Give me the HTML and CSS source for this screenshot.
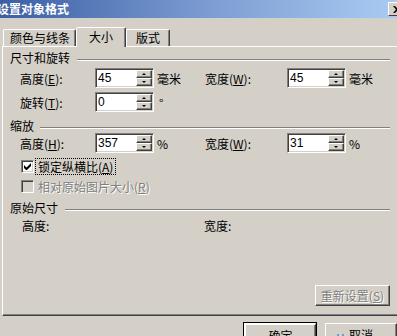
FILE: index.html
```html
<!DOCTYPE html>
<html lang="zh-CN">
<head>
    <meta charset="UTF-8">
    <title>设置对象格式</title>
    <link rel="stylesheet" href="styles.css">
</head>
<body>
    <div class="dialog">
        <div class="titlebar">
            <span class="title">设置对象格式</span>
            <span class="close">
                <svg width="8" height="7" viewBox="0 0 8 7"><path d="M0 0h2l2 2 2-2h2L5 3.5 8 7H6L4 5 2 7H0l3-3.5z" fill="#000"/></svg>
            </span>
        </div>

        <div class="tabs">
            <div class="tab tab-first">颜色与线条</div>
            <div class="tab active">大小</div>
            <div class="tab">版式</div>
        </div>

        <div class="panel">
            <div class="legend legend-size"><span>尺寸和旋转</span><i class="rule"></i></div>
            <div class="row row-first">
                <div class="field">
                    <label class="lbl">高度(<u>E</u>):</label>
                    <div class="spin"><span class="value">45</span><span class="arrows"><b class="btn"><i class="up"></i></b><b class="btn"><i class="down"></i></b></span></div>
                    <span class="unit">毫米</span>
                </div>
                <div class="field">
                    <label class="lbl lbl-wide">宽度(<u>W</u>):</label>
                    <div class="spin"><span class="value">45</span><span class="arrows"><b class="btn"><i class="up"></i></b><b class="btn"><i class="down"></i></b></span></div>
                    <span class="unit">毫米</span>
                </div>
            </div>
            <div class="row">
                <div class="field">
                    <label class="lbl">旋转(<u>T</u>):</label>
                    <div class="spin"><span class="value">0</span><span class="arrows"><b class="btn"><i class="up"></i></b><b class="btn"><i class="down"></i></b></span></div>
                    <span class="unit unit-deg">°</span>
                </div>
            </div>

            <div class="legend legend-scale"><span>缩放</span><i class="rule"></i></div>
            <div class="row">
                <div class="field">
                    <label class="lbl">高度(<u>H</u>):</label>
                    <div class="spin"><span class="value">357</span><span class="arrows"><b class="btn"><i class="up"></i></b><b class="btn"><i class="down"></i></b></span></div>
                    <span class="unit">%</span>
                </div>
                <div class="field">
                    <label class="lbl lbl-wide">宽度(<u>W</u>):</label>
                    <div class="spin"><span class="value">31</span><span class="arrows"><b class="btn"><i class="up"></i></b><b class="btn"><i class="down"></i></b></span></div>
                    <span class="unit">%</span>
                </div>
            </div>
            <div class="check check-first">
                <span class="box"><svg width="7" height="7" viewBox="0 0 7 7"><path d="M0 2v3l2 2h1l4-4V0L2.5 4.5z" fill="#000"/></svg></span>
                <span class="check-label focus">锁定纵横比(<u>A</u>)</span>
            </div>
            <div class="check disabled">
                <span class="box"></span>
                <span class="check-label">相对原始图片大小(<u>R</u>)</span>
            </div>

            <div class="legend legend-orig"><span>原始尺寸</span><i class="rule"></i></div>
            <div class="orig">
                <span class="orig-item">高度:</span>
                <span>宽度:</span>
            </div>

            <div class="actions">
                <button class="button disabled">重新设置(<u>S</u>)</button>
            </div>
        </div>

        <div class="footer">
            <button class="button default">确定</button>
            <button class="button">取消<span class="cursor"></span></button>
        </div>
    </div>
</body>
</html>
```

FILE: styles.css
```css
body {
    margin: 0;
    background-color: #d4d0c8;
    font-family: "Noto Sans CJK SC", "Liberation Sans", sans-serif;
    font-size: 12px;
    color: #000;
    overflow: hidden;
}
.dialog {
    width: 397px;
    height: 336px;
    overflow: hidden;
}
.titlebar {
    height: 18px;
    display: flex;
    align-items: center;
    justify-content: space-between;
    background: linear-gradient(to right, #3a5fa4, #7f9fd4 55%, #a9cbf2);
}
.title {
    margin-left: -3px;
    color: #fff;
    font-weight: bold;
    line-height: 14px;
}
.close {
    width: 16px;
    height: 12px;
    margin-right: -9px;
    background-color: #d4d0c8;
    border: 1px solid;
    border-color: #fff #404040 #404040 #fff;
    display: flex;
    align-items: center;
    justify-content: center;
}

/* tabs */
.tabs {
    height: 28px;
    display: flex;
    align-items: flex-end;
    padding-left: 3px;
}
.tab {
    height: 16px;
    line-height: 16px;
    padding: 0 9px;
    border: 1px solid;
    border-bottom: none;
    border-color: #fff #404040 transparent #fff;
    box-shadow: inset -1px 0 #808080;
    border-radius: 2px 2px 0 0;
}
.tab-first {
    padding: 0 5px 0 6px;
}
.tab.active {
    height: 19px;
    line-height: 17px;
    padding: 0 12px;
    margin: 0 0 -1px;
    background-color: #d4d0c8;
    position: relative;
}

/* panel */
.panel {
    box-sizing: border-box;
    width: 395px;
    height: 270px;
    margin-left: 2px;
    padding: 0 7px;
    border-top: 1px solid #fff;
    border-left: 1px solid #fff;
    border-bottom: 1px solid #404040;
    box-shadow: inset 0 -1px #808080;
}
.legend {
    display: flex;
    align-items: center;
    height: 14px;
    line-height: 14px;
}
.legend .rule {
    flex: 1;
    height: 0;
    margin: 3px 0 0 7px;
    border-top: 1px solid #808080;
    border-bottom: 1px solid #fff;
}
.legend-size {
    margin-top: 4px;
}
.legend-scale {
    margin-top: 7px;
}
.legend-scale .rule {
    margin-left: 6px;
}
.legend-orig {
    margin-top: 6px;
}

.row {
    display: flex;
    height: 20px;
    margin-top: 4px;
    padding-left: 10px;
}
.row-first {
    margin-top: 3px;
}
.legend-scale + .row {
    margin-top: 0;
}
.field {
    width: 185px;
    display: flex;
    align-items: center;
}
.lbl {
    width: 75px;
}
.lbl-wide {
    width: 82px;
}
.spin {
    box-sizing: border-box;
    width: 59px;
    height: 20px;
    display: flex;
    background-color: #fff;
    border: 1px solid;
    border-color: #808080 #fff #fff #808080;
    box-shadow: inset 1px 1px #404040, inset -1px -1px #d4d0c8;
}
.value {
    flex: 1;
    padding: 1px 0 0 2px;
    font-family: "Liberation Sans", sans-serif;
    line-height: 16px;
}
.arrows {
    width: 16px;
    margin: 1px 1px 1px 0;
    display: flex;
    flex-direction: column;
}
.btn {
    flex: 1;
    box-sizing: border-box;
    background-color: #d4d0c8;
    border: 1px solid;
    border-color: #fff #404040 #404040 #fff;
    box-shadow: inset -1px -1px #808080;
    display: flex;
    align-items: center;
    justify-content: center;
}
.up, .down {
    width: 0;
    height: 0;
    border-left: 2px solid transparent;
    border-right: 2px solid transparent;
}
.up {
    border-bottom: 2px solid #000;
}
.down {
    border-top: 2px solid #000;
}
.unit {
    margin-left: 3px;
}
.unit-deg {
    margin-left: 5px;
}

/* checkboxes */
.check {
    display: flex;
    align-items: center;
    height: 17px;
    margin-top: 3px;
    padding-left: 11px;
}
.check-first {
    margin-top: 5px;
}
.box {
    box-sizing: border-box;
    width: 13px;
    height: 13px;
    background-color: #fff;
    border: 1px solid;
    border-color: #808080 #fff #fff #808080;
    box-shadow: inset 1px 1px #404040, inset -1px -1px #d4d0c8;
    display: flex;
    align-items: center;
    justify-content: center;
}
.check-label {
    margin-left: 2px;
    padding: 0 2px;
    line-height: 15px;
}
.focus {
    outline: 1px dotted #000;
}
.check.disabled .box {
    background-color: #d4d0c8;
}

.orig {
    display: flex;
    height: 14px;
    line-height: 14px;
    margin-top: 4px;
    padding-left: 12px;
}
.orig-item {
    width: 182px;
}

/* buttons */
.actions {
    display: flex;
    justify-content: flex-end;
    margin-top: 52px;
}
.button {
    box-sizing: border-box;
    width: 75px;
    height: 21px;
    padding: 0;
    font: inherit;
    color: #000;
    background-color: #d4d0c8;
    border: 1px solid;
    border-color: #fff #404040 #404040 #fff;
    box-shadow: inset -1px -1px #808080;
}
.disabled,
.button.disabled {
    color: #808080;
    text-shadow: 1px 1px #fff;
}
.footer {
    display: flex;
    gap: 9px;
    padding: 7px 0 0 244px;
}
.footer .button {
    width: 74px;
    height: 23px;
    position: relative;
}
.default {
    outline: 1px solid #000;
    outline-offset: 0;
    border-width: 2px 1px 1px 2px;
}
.cursor {
    position: absolute;
    left: 11px;
    top: 10px;
    width: 3px;
    height: 3px;
    border: 2px solid #6b9bd8;
    border-top: none;
}
```
